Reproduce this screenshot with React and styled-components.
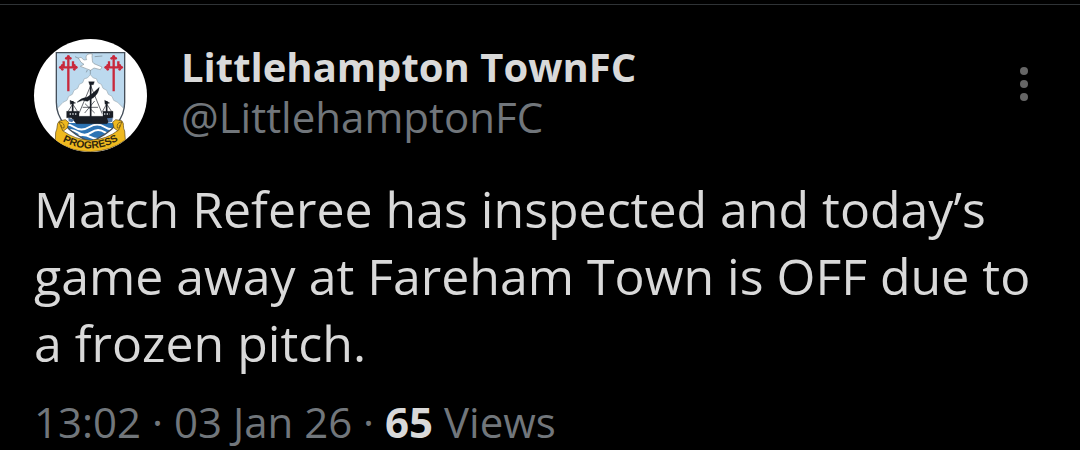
import React from "react";
import styled, { createGlobalStyle } from "styled-components";

const GlobalStyle = createGlobalStyle`
  body {
    margin: 0;
    background: #000;
    color: #d9d9d9;
    font-family: "Open Sans", "Noto Sans", sans-serif;
  }
`;

const Post = styled.article`
  margin-top: 4px;
  padding: 34px 32px 0 34px;
  border-top: 1px solid #2f3336;
`;

const Header = styled.header`
  display: flex;
  align-items: flex-start;
  gap: 34px;
`;

const Avatar = styled.svg`
  flex: none;
  width: 113px;
  height: 113px;
  border-radius: 50%;
  background: #fff;
`;

const Author = styled.div`
  display: flex;
  flex: 1;
  flex-direction: column;
  align-items: flex-start;
  min-width: 0;
  padding-top: 3px;
`;

const AuthorLink = styled.a`
  color: ${props => (props.$strong ? "#d9d9d9" : "#71767b")};
  font-size: ${props => (props.$strong ? 40 : 42)}px;
  font-weight: ${props => (props.$strong ? 700 : 400)};
  line-height: 50px;
  text-decoration: none;
`;

const MoreButton = styled.button`
  width: 48px;
  height: 48px;
  margin-top: 21px;
  padding: 0;
  border: 0;
  background: none;
  color: #666;
  cursor: pointer;

  svg {
    display: block;
  }
`;

const Body = styled.p`
  margin: 24px 0 20px;
  font-size: 50px;
  line-height: 67px;
`;

const Meta = styled.footer`
  color: #71767b;
  font-size: 42px;
  line-height: 50px;

  strong {
    color: #d9d9d9;
  }
`;

const Cross = ({ x }) => (
  <g transform={`translate(${x} 0)`} fill="#c8283c">
    <path
      d="M0 68V172M-22 100H22M-14 82V100M14 82V100"
      fill="none"
      stroke="#c8283c"
      strokeWidth="7"
    />
    <circle cx="0" cy="68" r="5" />
    <circle cx="-6" cy="73" r="4" />
    <circle cx="6" cy="73" r="4" />
    <circle cx="-23" cy="100" r="5" />
    <circle cx="23" cy="100" r="5" />
    <circle cx="-18" cy="94" r="4" />
    <circle cx="18" cy="94" r="4" />
    <circle cx="-18" cy="106" r="4" />
    <circle cx="18" cy="106" r="4" />
  </g>
);

const Crest = () => (
  <Avatar viewBox="12 15 339 339" role="img" aria-label="Club crest">
    <defs>
      <clipPath id="shield">
        <path d="M79 56H284V205C284 262 238 300 181 324C124 300 79 262 79 205Z" />
      </clipPath>
      <path id="motto" d="M84 314Q181 374 279 311" />
    </defs>
    <g clipPath="url(#shield)">
      <path d="M79 56H284V325H79Z" fill="#bcd9ee" />
      <path
        d="M181 122L190 132L199 134L204 146L214 151L219 163L230 169L235 181L246 187L251 199L263 205L284 226V272H79V226L99 205L111 199L116 187L127 181L132 169L143 163L148 151L158 146L163 134L172 132Z"
        fill="#fff"
        stroke="#9caab4"
        strokeWidth="2"
      />
      <path d="M79 267H284V325H79Z" fill="#2c73b4" />
      <path
        d="M88 279Q110 264 132 279T178 279T224 279T276 277M102 295Q122 281 143 295T184 295T225 295T266 293M135 309Q158 297 181 309T227 309"
        fill="none"
        stroke="#fff"
        strokeWidth="6"
      />
    </g>
    <Cross x={115} />
    <Cross x={251} />
    <path
      d="M145 72L153 70L162 78L170 77C164 65 173 57 187 60L186 68C188 77 185 84 192 89L216 99L211 107L192 102L182 109L169 104L151 97L162 91L153 85Z"
      fill="#fff"
      stroke="#8e989f"
      strokeWidth="2"
    />
    <path
      d="M135 68L146 73M194 68L217 66M181 108V121M172 108L169 115"
      fill="none"
      stroke="#77858d"
      strokeWidth="2"
    />
    <g fill="#191d25" stroke="#191d25">
      <path
        d="M110 232H147V247H219V232H249V250L231 269H139L124 251H110Z"
        strokeWidth="1"
      />
      <path d="M182 146V251M128 201V235M230 201V235" fill="none" strokeWidth="5" />
      <path d="M176 143H193L190 152H179Z" />
      <path d="M141 205Q153 192 171 190Q191 177 208 160Q206 178 192 190Q182 196 172 202L158 199Z" />
      <path d="M120 199L137 207L121 211ZM224 199L239 207L225 211Z" />
      <path
        d="M182 155L147 238M182 155L217 240M165 209L194 237M194 201L164 237M158 220H204M128 210L114 233M128 210L143 233M230 210L217 233M230 210L245 233"
        fill="none"
        strokeWidth="2"
      />
    </g>
    <path
      d="M119 240H139M214 240H239"
      stroke="#d7dce0"
      strokeWidth="4"
      strokeDasharray="4 4"
    />
    <path
      d="M115 251L133 257L126 265L116 262ZM231 253L248 251L247 263L236 266Z"
      fill="#5277a5"
    />
    <path
      d="M79 56H284V205C284 262 238 300 181 324C124 300 79 262 79 205Z"
      fill="none"
      stroke="#454f5a"
      strokeWidth="4"
    />
    <g fill="#efb91f" stroke="#5b4617" strokeWidth="2">
      <path d="M88 261L106 257L116 265L112 282L100 291L87 279Z" />
      <path d="M275 260L257 257L248 265L252 282L264 291L277 279Z" />
      <path d="M87 263C79 268 84 282 77 295L76 320Q125 354 181 353Q241 352 286 318L284 291C277 281 284 268 276 262L266 288Q229 317 181 319Q134 317 98 290Z" />
      <path
        d="M90 264Q105 267 102 282Q91 282 94 273M273 264Q259 266 262 282Q272 282 269 273"
        fill="none"
      />
    </g>
    <text
      fill="#30270e"
      fontFamily="Liberation Sans, sans-serif"
      fontSize="31"
      fontWeight="700"
      textAnchor="middle"
    >
      <textPath href="#motto" startOffset="50%">
        PROGRESS
      </textPath>
    </text>
  </Avatar>
);

const App = () => {
  return (
    <>
      <GlobalStyle />
      <Post>
        <Header>
          <Crest />
          <Author>
            <AuthorLink href="#profile" $strong>
              Littlehampton TownFC
            </AuthorLink>
            <AuthorLink href="#profile">@LittlehamptonFC</AuthorLink>
          </Author>
          <MoreButton type="button" aria-label="More options">
            <svg width="48" height="48" viewBox="0 0 48 48" fill="currentColor">
              <circle cx="24" cy="11" r="4" />
              <circle cx="24" cy="24" r="4" />
              <circle cx="24" cy="37" r="4" />
            </svg>
          </MoreButton>
        </Header>
        <Body>
          Match Referee has inspected and today’s game away at Fareham Town is
          OFF due to a frozen pitch.
        </Body>
        <Meta>
          <time dateTime="2026-01-03T13:02">13:02 · 03 Jan 26</time> ·{" "}
          <strong>65</strong> Views
        </Meta>
      </Post>
    </>
  );
};

export default App;
